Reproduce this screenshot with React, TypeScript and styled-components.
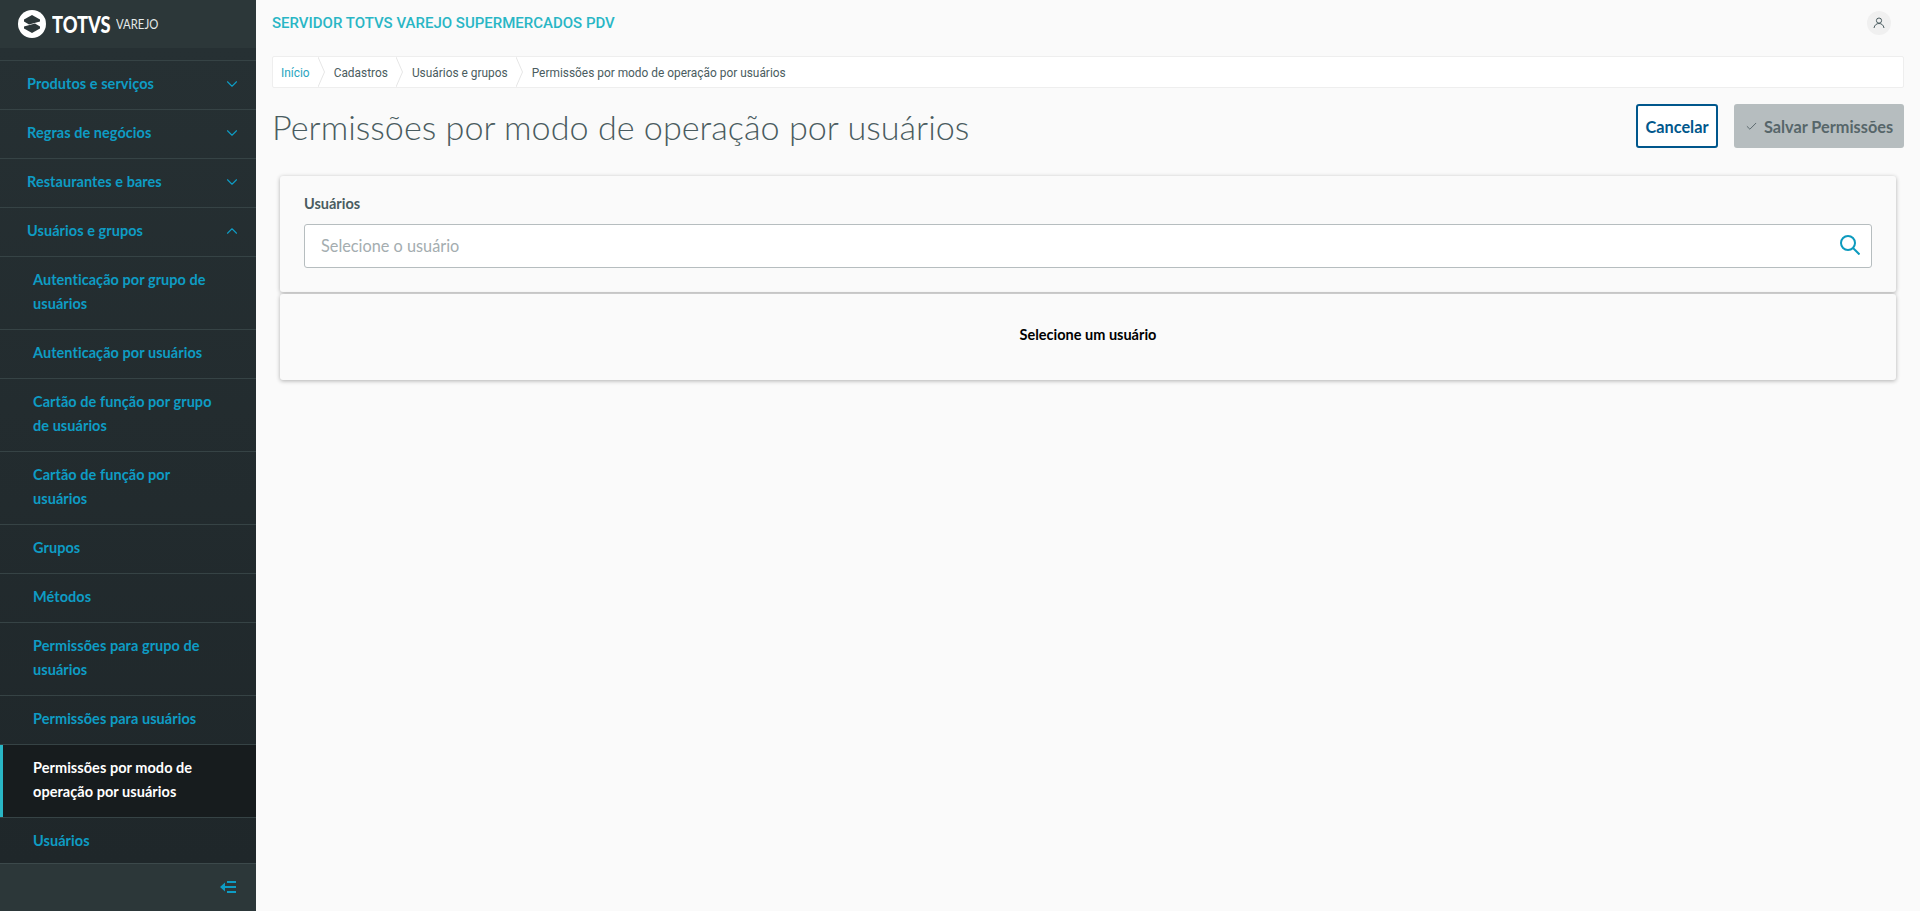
import React from "react";
import styled, { createGlobalStyle } from "styled-components";
import { ChevronDown, ChevronUp, Check } from "lucide-react";

const GlobalStyle = createGlobalStyle`
  html, body {
    margin: 0;
    padding: 0;
    height: 100%;
    background: #fafafa;
    font-family: "Lato", "Noto Sans", sans-serif;
  }
  #root {
    height: 100%;
  }
  * {
    box-sizing: border-box;
  }
`;

const Page = styled.div`
  display: flex;
  height: 911px;
  overflow: hidden;
`;

const SideBar = styled.aside`
  width: 256px;
  flex: none;
  display: flex;
  flex-direction: column;
  background: #2c3739;
`;

const Brand = styled.div`
  height: 48px;
  flex: none;
  display: flex;
  align-items: center;
  padding: 0 0 0 18px;
  color: #fff;
  svg {
    flex: none;
    margin-right: 6px;
  }
  .name {
    width: 64px;
    font-weight: 900;
    font-size: 22px;
    transform: scaleX(0.83);
    transform-origin: left center;
  }
  .sub {
    font-weight: 400;
    font-size: 13.5px;
    color: #e6eaea;
    transform: scaleX(0.84);
    transform-origin: left center;
  }
`;

const Menu = styled.nav`
  flex: 1;
  min-height: 0;
  overflow: hidden;
  padding-top: 12px;
  background: linear-gradient(#263033, #1f272a);
`;

const MenuRow = styled.a<{ $sub?: boolean; $active?: boolean }>`
  display: flex;
  align-items: center;
  justify-content: space-between;
  position: relative;
  padding: 11px 15px 13px ${(p) => (p.$sub ? "33px" : "27px")};
  border-top: 1px solid #364345;
  font-size: 14.5px;
  font-weight: 700;
  line-height: 24px;
  letter-spacing: 0.05px;
  white-space: pre-line;
  color: ${(p) => (p.$active ? "#fff" : "#0e9cc4")};
  background: ${(p) => (p.$active ? "#171c1e" : "transparent")};
  svg {
    flex: none;
  }
  ${(p) =>
    p.$active &&
    `
    &::before {
      content: "";
      position: absolute;
      left: 0;
      top: 0;
      bottom: 0;
      width: 3px;
      background: #29b6c5;
    }
  `}
`;

const MenuFooter = styled.div`
  height: 48px;
  flex: none;
  display: flex;
  align-items: center;
  justify-content: flex-end;
  padding: 0 20px 2px 0;
  border-top: 1px solid #3c494b;
  color: #0e9cc4;
`;

const Main = styled.main`
  flex: 1;
  min-width: 0;
  padding: 0 16px;
  background: #fafafa;
`;

const TopBar = styled.header`
  height: 56px;
  display: flex;
  align-items: center;
  justify-content: space-between;
  padding: 0 0 10px 0;
`;

const ServerName = styled.div`
  font-family: "Roboto", sans-serif;
  font-size: 15px;
  font-weight: 500;
  color: #29b6c5;
`;

const Avatar = styled.div`
  width: 24px;
  height: 24px;
  margin-right: 13px;
  border-radius: 50%;
  background: #f0f0f0;
  display: flex;
  align-items: center;
  justify-content: center;
`;

const Crumbs = styled.ol`
  height: 32px;
  margin: 0;
  padding: 1px 0 0 8px;
  list-style: none;
  display: flex;
  align-items: stretch;
  background: #fff;
  border: 1px solid #eeeeee;
  border-radius: 2px;
  font-family: "Roboto", sans-serif;
`;

const Crumb = styled.li<{ $link?: boolean }>`
  display: flex;
  align-items: center;
  font-size: 11.9px;
  color: ${(p) => (p.$link ? "#29a5c0" : "#4a5c60")};
  svg {
    margin: -1px 9px 0 8px;
    flex: none;
  }
`;

const TitleRow = styled.div`
  display: flex;
  align-items: center;
  justify-content: space-between;
  padding-top: 16px;
`;

const Title = styled.h1`
  margin: 0;
  height: 44px;
  font-weight: 300;
  font-size: 34.2px;
  line-height: 46px;
  color: #4a5c60;
`;

const Actions = styled.div`
  display: flex;
  gap: 16px;
`;

const OutlineButton = styled.button`
  width: 82px;
  height: 44px;
  padding: 0;
  background: #fff;
  border: 2px solid #00578c;
  border-radius: 3px;
  font-family: inherit;
  font-size: 16.3px;
  font-weight: 700;
  color: #00578c;
`;

const DisabledButton = styled.button`
  width: 170px;
  height: 44px;
  padding: 0;
  background: #b6bdbf;
  border: 0;
  border-radius: 3px;
  display: flex;
  align-items: center;
  justify-content: center;
  gap: 6px;
  font-family: inherit;
  font-size: 16.3px;
  font-weight: 700;
  color: #57666a;
`;

const Cards = styled.div`
  margin: 28px 8px 0;
  display: flex;
  flex-direction: column;
  gap: 2px;
`;

const Card = styled.section`
  background: #fafafa;
  border-radius: 3px;
  box-shadow: 0 1px 4px rgba(0, 0, 0, 0.3);
`;

const FilterCard = styled(Card)`
  height: 116px;
  padding: 19px 24px 0;
`;

const EmptyCard = styled(Card)`
  height: 86px;
  padding-top: 32px;
  text-align: center;
  font-size: 14.5px;
  font-weight: 700;
  line-height: 18px;
  color: #000;
`;

const Label = styled.label`
  display: block;
  font-size: 14.5px;
  font-weight: 700;
  line-height: 18px;
  color: #4a5c60;
  margin-bottom: 11px;
`;

const InputBox = styled.div`
  height: 44px;
  padding: 0 11px 2px 16px;
  display: flex;
  align-items: center;
  justify-content: space-between;
  background: #fff;
  border: 1px solid #b6bdbf;
  border-radius: 3px;
  font-size: 16.3px;
  color: #a4adb0;
`;

const menuItems = [
  { label: "Produtos e serviços", icon: "down" },
  { label: "Regras de negócios", icon: "down" },
  { label: "Restaurantes e bares", icon: "down" },
  { label: "Usuários e grupos", icon: "up" },
  { label: "Autenticação por grupo de\nusuários", sub: true },
  { label: "Autenticação por usuários", sub: true },
  { label: "Cartão de função por grupo\nde usuários", sub: true },
  { label: "Cartão de função por\nusuários", sub: true },
  { label: "Grupos", sub: true },
  { label: "Métodos", sub: true },
  { label: "Permissões para grupo de\nusuários", sub: true },
  { label: "Permissões para usuários", sub: true },
  { label: "Permissões por modo de\noperação por usuários", sub: true, active: true },
  { label: "Usuários", sub: true },
];

const crumbs = ["Início", "Cadastros", "Usuários e grupos", "Permissões por modo de operação por usuários"];

const Separator = () => (
  <svg width="7" height="30" viewBox="0 0 7 30" fill="none">
    <path d="M0 0 L6.5 15 L0 30" stroke="#e6e6e6" strokeWidth="1" />
  </svg>
);

const App = () => {
  return (
    <Page>
      <GlobalStyle />
      <SideBar>
        <Brand>
          <svg width="28" height="28" viewBox="0 0 28 28">
            <circle cx="14" cy="14" r="14" fill="#fff" />
            <path d="M6 9.5 L14 5 L22 9.5 V11.5 L11 14.5 L6 11.5 Z" fill="#2c3739" />
            <path d="M22 18.5 L14 23 L6 18.5 V16.5 L17 13.5 L22 16.5 Z" fill="#2c3739" />
          </svg>
          <span className="name">TOTVS</span>
          <span className="sub">VAREJO</span>
        </Brand>
        <Menu>
          {menuItems.map((item) => (
            <MenuRow key={item.label} $sub={item.sub} $active={item.active}>
              <span>{item.label}</span>
              {item.icon === "down" && <ChevronDown size={18} strokeWidth={1.5} />}
              {item.icon === "up" && <ChevronUp size={18} strokeWidth={1.5} />}
            </MenuRow>
          ))}
        </Menu>
        <MenuFooter>
          <svg width="16" height="12" viewBox="0 0 16 12" fill="currentColor">
            <path d="M0 6 L5 1.5 V5 H16 V7 H5 V10.5 Z" />
            <rect x="7" y="0" width="9" height="2" />
            <rect x="7" y="10" width="9" height="2" />
          </svg>
        </MenuFooter>
      </SideBar>
      <Main>
        <TopBar>
          <ServerName>SERVIDOR TOTVS VAREJO SUPERMERCADOS PDV</ServerName>
          <Avatar>
            <svg width="12" height="12" viewBox="0 0 12 12" fill="none" stroke="#4a5c60" strokeWidth="1">
              <circle cx="6" cy="3.6" r="2.6" />
              <path d="M1 11 C1.5 8 3.5 6.5 6 6.5 C8.5 6.5 10.5 8 11 11" />
            </svg>
          </Avatar>
        </TopBar>
        <Crumbs>
          {crumbs.map((c, i) => (
            <Crumb key={c} $link={i === 0}>
              {c}
              {i < crumbs.length - 1 && <Separator />}
            </Crumb>
          ))}
        </Crumbs>
        <TitleRow>
          <Title>Permissões por modo de operação por usuários</Title>
          <Actions>
            <OutlineButton>Cancelar</OutlineButton>
            <DisabledButton>
              <Check size={13} strokeWidth={1.75} />
              Salvar Permissões
            </DisabledButton>
          </Actions>
        </TitleRow>
        <Cards>
          <FilterCard>
            <Label>Usuários</Label>
            <InputBox>
              Selecione o usuário
              <svg width="20" height="20" viewBox="0 0 20 20" fill="none" stroke="#0c9abe" strokeWidth="2">
                <circle cx="8" cy="8" r="7" />
                <path d="M13 13 L19.5 19.5" />
              </svg>
            </InputBox>
          </FilterCard>
          <EmptyCard>Selecione um usuário</EmptyCard>
        </Cards>
      </Main>
    </Page>
  );
};

export default App;
